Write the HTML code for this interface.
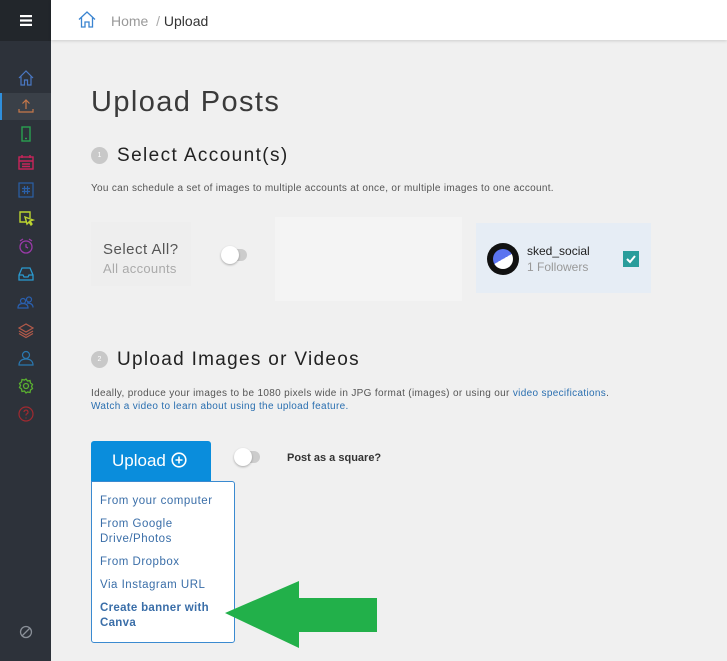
<!DOCTYPE html>
<html><head><meta charset="utf-8"><style>
*{margin:0;padding:0;box-sizing:border-box}
body{width:727px;height:661px;overflow:hidden;background:#f0f0f0;font-family:"Liberation Sans",sans-serif;position:relative;color:#333}
.side{position:absolute;left:0;top:0;width:51px;height:661px;background:#2d323a}
.side .top{height:41px;background:#22262b;display:flex;align-items:center;justify-content:center}
.ic{position:absolute;left:17px;width:18px;height:18px}
.hdr{position:absolute;left:51px;top:0;right:0;height:40px;background:#fff;box-shadow:0 1px 3px rgba(0,0,0,.15)}
.t{position:absolute;white-space:nowrap}
a{color:#2a6fb0;text-decoration:none}
</style></head><body>
<div class="side">
<div class="top"><svg width="12" height="11"><rect y="0" width="12" height="2.2" fill="#fff"/><rect y="4.4" width="12" height="2.2" fill="#fff"/><rect y="8.8" width="12" height="2.2" fill="#fff"/></svg></div>
<div style="position:absolute;left:0;top:93px;width:51px;height:27px;background:#3a4048;border-left:2px solid #2f8fdc"></div>
<svg class="ic" style="top:69px" viewBox="0 0 18 18" fill="none" stroke="#4a78c4" stroke-width="1.2"><path d="M2 9 L9 2 L16 9 M4 7.5 V16 H7.5 V11 H10.5 V16 H14 V7.5"/></svg>
<svg class="ic" style="top:97px" viewBox="0 0 18 18" fill="none" stroke="#c7784a" stroke-width="1.2"><path d="M9 12 V3 M5.5 6.5 L9 3 L12.5 6.5 M2 12 V15 H16 V12"/></svg>
<svg class="ic" style="top:125px" viewBox="0 0 18 18" fill="none" stroke="#2aa050" stroke-width="1.4"><rect x="5" y="2" width="8" height="14"/><path d="M8 13.5h2"/></svg>
<svg class="ic" style="top:153px" viewBox="0 0 18 18" fill="none" stroke="#c8245a" stroke-width="1.4"><rect x="2" y="4" width="14" height="12"/><path d="M2 8h14M5 2v3M13 2v3M5 11h8M5 13.5h8"/></svg>
<svg class="ic" style="top:181px" viewBox="0 0 18 18" fill="none" stroke="#2a60a8" stroke-width="1.2"><rect x="2" y="2" width="14" height="14"/><path d="M7.5 5v8M10.5 5v8M5 7.5h8M5 10.5h8"/></svg>
<svg class="ic" style="top:209px" viewBox="0 0 18 18" fill="none" stroke="#bcd430" stroke-width="1.4"><path d="M13 9V3H3v10h6"/><path d="M8 8l8 3-3 1 2 3-1 1-2-3-2 2z"/></svg>
<svg class="ic" style="top:237px" viewBox="0 0 18 18" fill="none" stroke="#9a3aa8" stroke-width="1.3"><circle cx="9" cy="10" r="6"/><path d="M3 4l3-2M15 4l-3-2M9 7v3l2 1"/></svg>
<svg class="ic" style="top:265px" viewBox="0 0 18 18" fill="none" stroke="#2a9ad0" stroke-width="1.3"><path d="M2 10l3-7h8l3 7v5H2z M2 10h4l1 2h4l1-2h4"/></svg>
<svg class="ic" style="top:293px" viewBox="0 0 18 18" fill="none" stroke="#2a60b0" stroke-width="1.2"><circle cx="6" cy="8" r="2.5"/><circle cx="12" cy="6.5" r="2.5"/><path d="M1 15c0-3 2-4.5 5-4.5s5 1.5 5 4.5zM10 10c3 0 6 1 6 4.5"/></svg>
<svg class="ic" style="top:321px" viewBox="0 0 18 18" fill="none" stroke="#b25a4a" stroke-width="1.2"><path d="M9 3L2 7l7 4 7-4zM2 10l7 4 7-4M2 12.5l7 4 7-4"/></svg>
<svg class="ic" style="top:349px" viewBox="0 0 18 18" fill="none" stroke="#2a78b0" stroke-width="1.2"><circle cx="9" cy="6" r="3.5"/><path d="M2 16c0-4 3-6 7-6s7 2 7 6z"/></svg>
<svg class="ic" style="top:377px" viewBox="0 0 18 18" fill="none" stroke="#5ab030" stroke-width="1.3"><circle cx="9" cy="9" r="2.5"/><path d="M9 2l1.5 2 2.5-.5.5 2.5 2 1.5-1 2 1 2-2 1.5-.5 2.5-2.5-.5L9 16l-1.5-2-2.5.5-.5-2.5-2-1.5 1-2-1-2 2-1.5.5-2.5 2.5.5z"/></svg>
<svg class="ic" style="top:405px" viewBox="0 0 18 18" fill="none" stroke="#a02a30" stroke-width="1.2"><circle cx="9" cy="9" r="7"/><path d="M7 7a2 2 0 1 1 2.5 2c-.5.2-.5.8-.5 1.5M9 12.5v1"/></svg>
<svg class="ic" style="top:623px" viewBox="0 0 18 18" fill="none" stroke="#8a9098" stroke-width="1.3"><circle cx="9" cy="9" r="5.5"/><path d="M5 13L13 5"/></svg>
</div>
<div class="hdr">
<svg style="position:absolute;left:27px;top:11px" width="18" height="17" viewBox="0 0 18 17" fill="none" stroke="#3a84d0" stroke-width="1.3"><path d="M1 8.5L9 1l8 7.5M3.5 6.5V16H7v-5h4v5h3.5V6.5"/></svg>
<div class="t" style="left:60px;top:13px;font-size:14px;color:#999">Home <span style="color:#aaa">&nbsp;/</span> <span style="color:#333">Upload</span></div>
</div>
<div class="t" style="left:91px;top:86px;font-size:29px;color:#3a3a3a;letter-spacing:1.4px">Upload Posts</div>
<div style="position:absolute;left:91px;top:147px;width:17px;height:17px;border-radius:50%;background:#c8c8c8;color:#fff;font-size:7px;text-align:center;line-height:17px">1</div>
<div class="t" style="left:117px;top:145px;font-size:19px;color:#222;letter-spacing:1.4px">Select Account(s)</div>
<div class="t" style="left:91px;top:183px;font-size:10px;color:#555;letter-spacing:0.3px">You can schedule a set of images to multiple accounts at once, or multiple images to one account.</div>
<div style="position:absolute;left:91px;top:222px;width:100px;height:64px;background:#eeeeee"></div>
<div class="t" style="left:103px;top:241px;font-size:15px;color:#555;letter-spacing:0.5px">Select All?</div>
<div class="t" style="left:103px;top:261px;font-size:13px;color:#aaa;letter-spacing:0.3px">All accounts</div>
<div style="position:absolute;left:223px;top:249px;width:24px;height:12px;border-radius:6px;background:#ccc"></div>
<div style="position:absolute;left:221px;top:246px;width:18px;height:18px;border-radius:50%;background:#fff;box-shadow:0 1px 2px rgba(0,0,0,.3)"></div>
<div style="position:absolute;left:275px;top:217px;width:187px;height:84px;background:#f4f4f4"></div>
<div style="position:absolute;left:476px;top:223px;width:175px;height:70px;background:#e6edf5"></div>
<div style="position:absolute;left:487px;top:243px;width:32px;height:32px;border-radius:50%;background:#111;overflow:hidden">
<div style="position:absolute;left:6px;top:6px;width:20px;height:20px;border-radius:50%;background:linear-gradient(150deg,#5b74f0 50%,#fff 50%)"></div></div>
<div class="t" style="left:527px;top:244px;font-size:12px;color:#222">sked_social</div>
<div class="t" style="left:527px;top:260px;font-size:12px;color:#999">1 Followers</div>
<div style="position:absolute;left:623px;top:251px;width:16px;height:16px;background:#2a9d9b"><svg width="16" height="16"><path d="M4 8l3 3 5-6" fill="none" stroke="#fff" stroke-width="2"/></svg></div>
<div style="position:absolute;left:91px;top:351px;width:17px;height:17px;border-radius:50%;background:#c8c8c8;color:#fff;font-size:7px;text-align:center;line-height:17px">2</div>
<div class="t" style="left:117px;top:349px;font-size:19px;color:#222;letter-spacing:1.3px">Upload Images or Videos</div>
<div class="t" style="left:91px;top:388px;font-size:10px;color:#555;letter-spacing:0.33px">Ideally, produce your images to be 1080 pixels wide in JPG format (images) or using our <a>video specifications</a>.</div>
<div class="t" style="left:91px;top:401px;font-size:10px;letter-spacing:0.33px"><a>Watch a video to learn about using the upload feature.</a></div>
<div style="position:absolute;left:91px;top:441px;width:120px;height:40px;background:#0a8ddc;border-radius:3px 3px 0 0;color:#fff;font-size:17px;line-height:40px;padding-left:21px">Upload <svg style="vertical-align:-2px" width="16" height="16"><circle cx="8" cy="8" r="6.8" fill="none" stroke="#fff" stroke-width="1.6"/><path d="M8 4.5v7M4.5 8h7" stroke="#fff" stroke-width="1.6"/></svg></div>
<div style="position:absolute;left:236px;top:451px;width:24px;height:12px;border-radius:6px;background:#ccc"></div>
<div style="position:absolute;left:234px;top:448px;width:18px;height:18px;border-radius:50%;background:#fff;box-shadow:0 1px 2px rgba(0,0,0,.3)"></div>
<div class="t" style="left:287px;top:452px;font-size:11px;font-weight:bold;color:#333">Post as a square?</div>
<div style="position:absolute;left:91px;top:481px;width:144px;height:162px;background:#fff;border:1px solid #3a8ad0;border-radius:0 3px 3px 3px;font-size:11.5px;color:#3a6ea8;line-height:15px;letter-spacing:0.5px">
<div style="position:absolute;left:8px;top:12px">From your computer</div>
<div style="position:absolute;left:8px;top:35px">From Google<br>Drive/Photos</div>
<div style="position:absolute;left:8px;top:73px">From Dropbox</div>
<div style="position:absolute;left:8px;top:96px">Via Instagram URL</div>
<div style="position:absolute;left:8px;top:119px;font-weight:bold;letter-spacing:0.3px">Create banner with<br>Canva</div>
</div>
<svg style="position:absolute;left:0;top:0" width="727" height="661"><polygon points="225,613 299,581 299,598 377,598 377,632 299,632 299,648" fill="#22b04a"/></svg>
</body></html>
